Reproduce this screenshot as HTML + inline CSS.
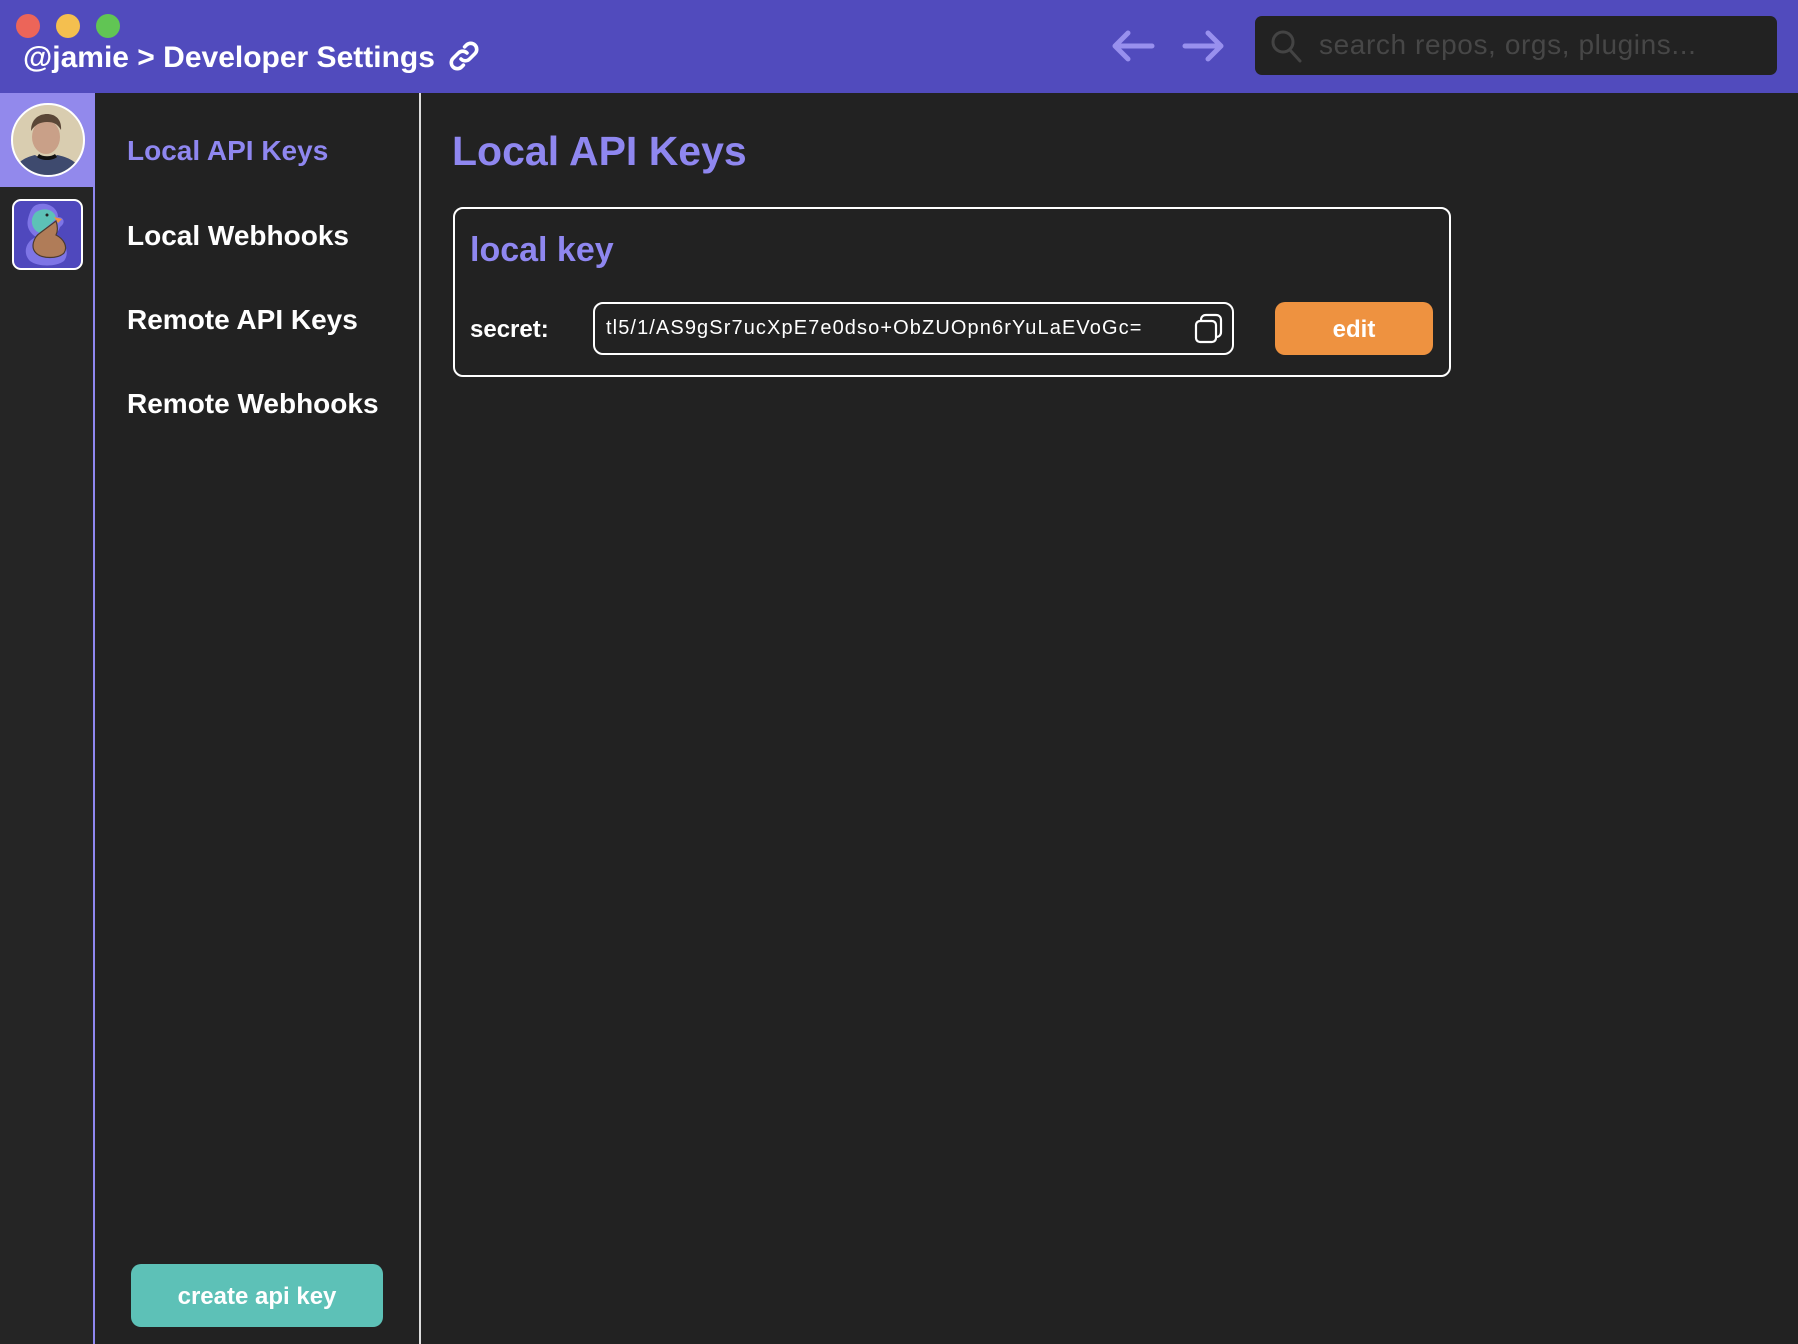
<!DOCTYPE html>
<html><head><meta charset="utf-8"><style>
*{margin:0;padding:0;box-sizing:border-box}
body{width:1798px;height:1344px;background:#222;font-family:"Liberation Sans","DejaVu Sans",sans-serif;position:relative;overflow:hidden;color:#fff}
.abs{position:absolute}
.top{left:0;top:0;width:1798px;height:93px;background:#514bbd}
.dot{width:24px;height:24px;border-radius:50%;top:14px}
.title{left:23px;top:41px;font-size:30px;font-weight:bold;color:#fff;white-space:nowrap}
.search{left:1255px;top:16px;width:522px;height:59px;background:#222;border-radius:7px}
.search span{position:absolute;left:64px;top:13px;font-size:28px;color:#474747;letter-spacing:0.6px}
.side{left:0;top:93px;width:95px;height:1251px;background:#252525;border-right:2px solid #8f87f0}
.nav{left:127px;font-size:28px;font-weight:bold;color:#fff;white-space:nowrap}
.sep{left:419px;top:93px;width:2px;height:1251px;background:#ddd}
.btn{border-radius:10px;text-align:center;font-weight:bold;color:#fff}
</style></head><body>
<div class="abs top"></div>
<div class="abs dot" style="left:16px;background:#ec6559"></div>
<div class="abs dot" style="left:56px;background:#f4bf4f"></div>
<div class="abs dot" style="left:96px;background:#61c554"></div>
<div class="abs title">@jamie &gt; Developer Settings</div>
<svg class="abs" style="left:446px;top:38px" width="36" height="36" viewBox="0 0 24 24" fill="none" stroke="#fff" stroke-width="2.4" stroke-linecap="round"><path d="M10 14a4 4 0 0 0 5.7 0l3.6-3.6a4 4 0 0 0-5.7-5.7l-1.2 1.2"/><path d="M14 10a4 4 0 0 0-5.7 0l-3.6 3.6a4 4 0 0 0 5.7 5.7l1.2-1.2"/></svg>
<svg class="abs" style="left:1110px;top:28px" width="120" height="36" viewBox="0 0 120 36" fill="none" stroke="#9890ee" stroke-width="5" stroke-linecap="round" stroke-linejoin="round"><path d="M42 18H6M18 5L5 18l13 13"/><path d="M75 18h36M98 5l13 13-13 13"/></svg>
<div class="abs search"><svg class="abs" style="left:14px;top:12px" width="34" height="36" viewBox="0 0 34 36" fill="none" stroke="#444" stroke-width="3" stroke-linecap="round"><circle cx="14" cy="14" r="10"/><path d="M21 22l10 11"/></svg><span>search repos, orgs, plugins...</span></div>
<div class="abs side"></div>
<div class="abs" style="left:0;top:93px;width:94px;height:94px;background:#9289ec"></div>
<div class="abs" style="left:11px;top:103px;width:74px;height:74px;border-radius:50%;border:2px solid #fff;overflow:hidden;background:#d9cdb0">
<svg width="70" height="70" viewBox="0 0 70 70"><ellipse cx="33" cy="32" rx="14" ry="17" fill="#c9a088"/><path d="M18 26c0-12 8-17 16-17s15 5 14 16c-3-5-6-8-14-8s-13 4-16 9z" fill="#5a4636"/><path d="M0 70c2-14 14-18 22-20 6 4 16 4 22 0 10 2 22 6 26 20z" fill="#3e4a6e"/><path d="M24 52c5 4 15 4 20 0l-2-3c-4 3-12 3-16 0z" fill="#111"/></svg></div>
<div class="abs" style="left:12px;top:199px;width:71px;height:71px;border-radius:9px;border:2px solid #fff;background:#4f48bd;overflow:hidden">
<svg width="67" height="67" viewBox="0 0 67 67"><path d="M22 4c10-4 22 2 22 12 6 0 8 6 2 10-2 6-6 8-6 10 12 4 16 16 10 24-8 6-26 6-34 0-8-8-4-20 6-24-6-4-10-10-8-18 2-8 4-12 8-14z" fill="#7e75e6"/><path d="M24 10c8-4 18 0 18 8l-16 14c-6-2-9-8-8-14 1-4 3-7 6-8z" fill="#5dc1b7"/><path d="M40 16l8 2-4 4z" fill="#ee9240"/><path d="M26 32l16-12c2 6 2 10 0 14 8 4 12 12 8 18-6 6-22 6-28 0-6-6-2-16 4-20z" fill="#b07c58" stroke="#4a3a30" stroke-width="1.2"/><circle cx="33" cy="14" r="1.5" fill="#222"/></svg></div>
<div class="abs nav" style="top:135px;color:#8f87f0">Local API Keys</div>
<div class="abs nav" style="top:220px">Local Webhooks</div>
<div class="abs nav" style="top:304px">Remote API Keys</div>
<div class="abs nav" style="top:388px">Remote Webhooks</div>
<div class="abs btn" style="left:131px;top:1264px;width:252px;height:63px;background:#5dc1b7;font-size:24px;line-height:65px">create api key</div>
<div class="abs sep"></div>
<div class="abs" style="left:452px;top:128px;font-size:41px;font-weight:bold;color:#8f87f0">Local API Keys</div>
<div class="abs" style="left:453px;top:207px;width:998px;height:170px;border:2px solid #fff;border-radius:10px"></div>
<div class="abs" style="left:470px;top:231px;font-size:34px;color:#8f87f0;font-weight:bold">local key</div>
<div class="abs" style="left:470px;top:316px;font-size:24px;font-weight:bold">secret:</div>
<div class="abs" style="left:593px;top:302px;width:641px;height:53px;border:2px solid #fff;border-radius:10px"><span style="position:absolute;left:11px;top:13px;font-size:20px;letter-spacing:1.1px;white-space:nowrap">tl5/1/AS9gSr7ucXpE7e0dso+ObZUOpn6rYuLaEVoGc=</span>
<svg class="abs" style="left:597px;top:8px" width="34" height="34" viewBox="0 0 34 34" fill="none" stroke="#fff" stroke-width="2.2"><rect x="4" y="9" width="20" height="21" rx="4"/><path d="M9 8c0-3 2-5 5-5h10c3 0 5 2 5 5v12c0 3-2 5-5 5"/></svg></div>
<div class="abs btn" style="left:1275px;top:302px;width:158px;height:53px;background:#ee9240;font-size:24px;line-height:55px">edit</div>
</body></html>
